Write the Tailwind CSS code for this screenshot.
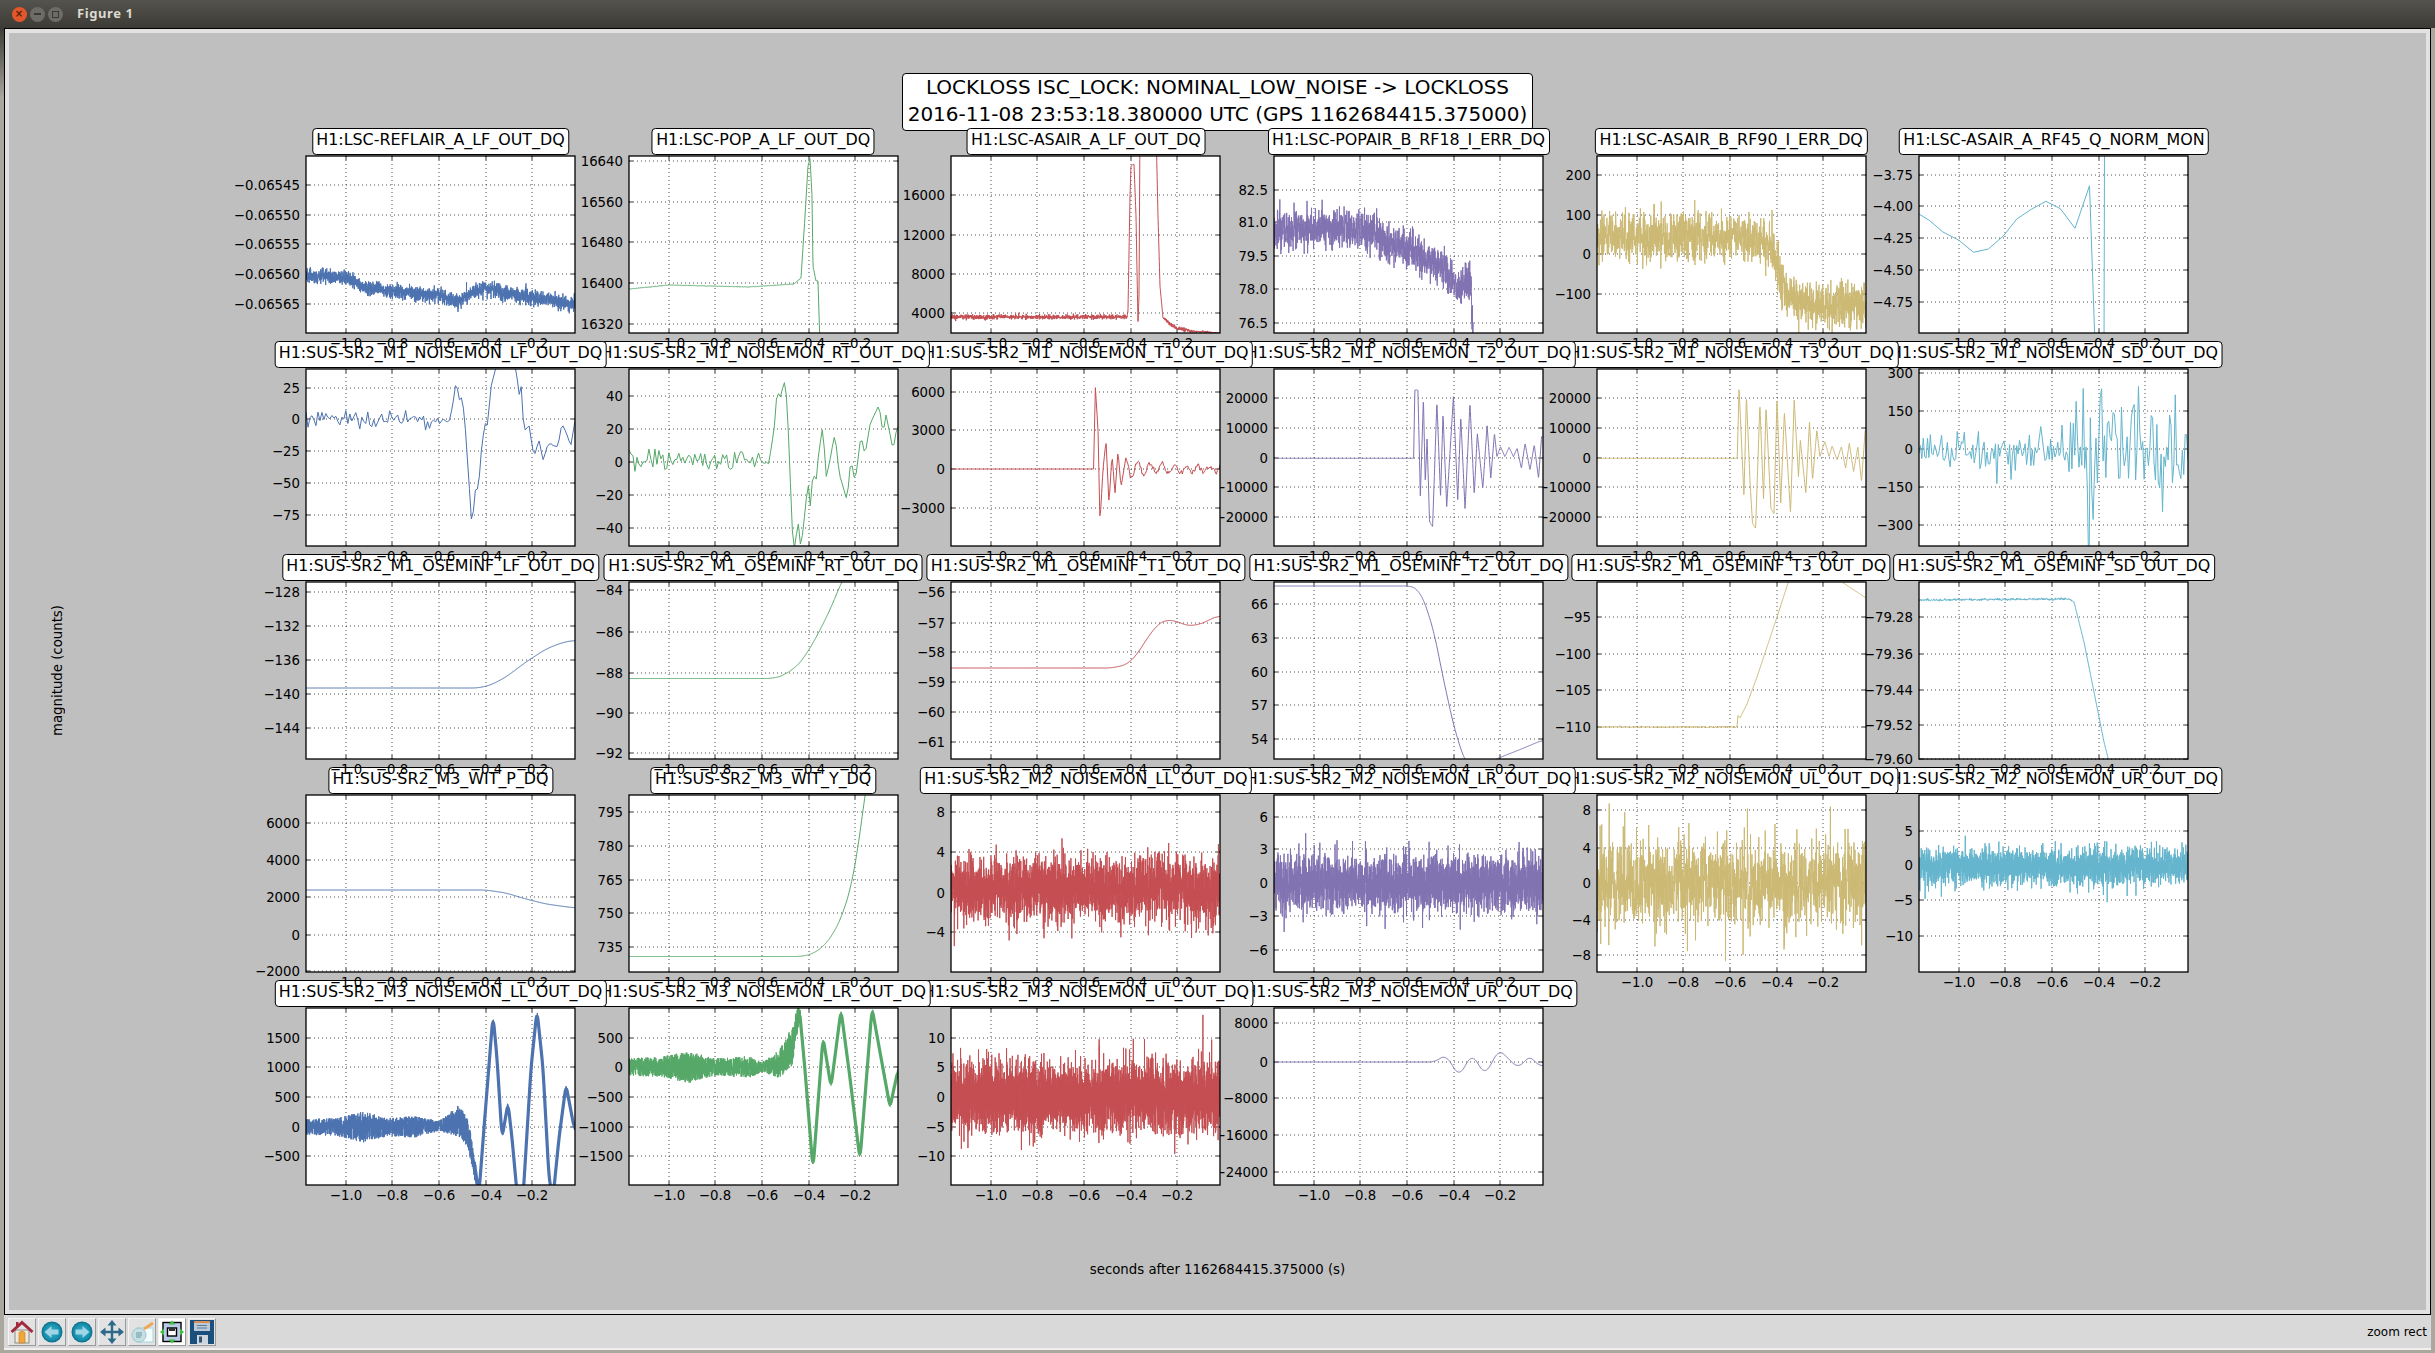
<!DOCTYPE html>
<html lang="en">

<head>
    <meta charset="UTF-8">
    <title>Figure 1</title>
    <script src="https://cdn.jsdelivr.net/npm/@tailwindcss/browser@4"></script>
</head>

<body class="flex h-[1353px] w-[2435px] flex-col overflow-hidden bg-[#aaa79f] font-['DejaVu_Sans',sans-serif] text-black">

    <!-- window title bar -->
    <div class="flex h-[28px] shrink-0 items-center bg-gradient-to-b from-[#55534d] to-[#3c3b36]">
        <div class="ml-[11.5px] flex h-[15px] w-[15px] items-center justify-center rounded-full bg-[#e2572b] text-[10px] leading-none font-bold text-[#5a1d08]">×</div>
        <div class="ml-[3.5px] flex h-[15px] w-[15px] items-center justify-center rounded-full bg-[#6d6c67]"><div class="h-[2px] w-[7px] bg-[#3a3934]"></div></div>
        <div class="ml-[3px] flex h-[15px] w-[15px] items-center justify-center rounded-full bg-[#6d6c67]"><div class="h-[7px] w-[7px] border border-[#3a3934]"></div></div>
        <span class="ml-[14px] font-['Noto_Sans',sans-serif] text-[13px] font-bold tracking-[0.6px] text-[#dcd9d0]">Figure 1</span>
    </div>

    <div class="flex min-h-0 flex-1">
        <div class="h-[70px] w-[4px] shrink-0 bg-gradient-to-b from-[#3c3b36] to-[#aaa79f]"></div>

        <div class="flex min-w-0 flex-1 flex-col pb-[3px]">
            <!-- figure canvas -->
            <div class="min-h-0 flex-1 border border-black">
                <div class="flex h-full flex-col items-center border-[4px] border-[#e2e2e2] bg-[#bfbfbf]">
                    <div class="relative mt-[40px] h-[58px] rounded-[4px] border border-black bg-white px-[5px] text-center text-[20px] leading-[27px] whitespace-nowrap">
                        LOCKLOSS ISC_LOCK: NOMINAL_LOW_NOISE -&gt; LOCKLOSS<br>2016-11-08 23:53:18.380000 UTC (GPS 1162684415.375000)
                    </div>
                    <div class="mt-[25px] flex items-center self-start">
                        <div class="ml-[39.5px] rotate-180 text-[13.300px] leading-[18px] whitespace-nowrap [writing-mode:vertical-rl]">magnitude (counts)</div>
                        <div id="plots" class="ml-[239.5px] grid grid-cols-[repeat(6,269px)] grid-rows-[repeat(5,177px)] gap-x-[53.7px] gap-y-[36px]"></div>
                    </div>
                    <div class="mt-[77px] text-[13.300px] leading-[16px] whitespace-nowrap">seconds after 1162684415.375000 (s)</div>
                </div>
            </div>

            <!-- toolbar -->
            <div class="flex h-[33px] shrink-0 items-center gap-[2px] bg-[#d9d9d9] pl-[3.5px]">
                <button class="flex h-[28px] w-[28px] items-center justify-center border border-t-[#f4f4f4] border-r-[#9a9a9a] border-b-[#9a9a9a] border-l-[#f4f4f4] bg-[#e2e2e2]">
                    <svg width="26" height="26" viewBox="0 0 26 26">
                        <rect x="6" y="11" width="14" height="13" fill="#eee9dc" stroke="#8b8b86" />
                        <path d="M10 24V13.5q3-3 6 0V24z" fill="#f2a63a" stroke="#b9802c" stroke-width=".6" />
                        <rect x="7" y="3" width="2.5" height="5" fill="#a3283c" />
                        <path d="M2.5 13 13 3.5 23.5 13" fill="none" stroke="#a3283c" stroke-width="3" />
                    </svg>
                </button>
                <button class="flex h-[28px] w-[28px] items-center justify-center border border-t-[#f4f4f4] border-r-[#9a9a9a] border-b-[#9a9a9a] border-l-[#f4f4f4] bg-[#e2e2e2]">
                    <svg width="26" height="26" viewBox="0 0 26 26">
                        <defs><radialGradient id="ball"><stop offset="0" stop-color="#3fb0c9" /><stop offset=".75" stop-color="#1590ad" /><stop offset="1" stop-color="#0d6c88" /></radialGradient></defs>
                        <circle cx="13" cy="13" r="10.5" fill="url(#ball)" />
                        <path d="M5.5 13 12.5 7v3.5h7v5h-7V19z" fill="#9fd5e4" />
                    </svg>
                </button>
                <button class="flex h-[28px] w-[28px] items-center justify-center border border-t-[#f4f4f4] border-r-[#9a9a9a] border-b-[#9a9a9a] border-l-[#f4f4f4] bg-[#e2e2e2]">
                    <svg width="26" height="26" viewBox="0 0 26 26">
                        <circle cx="13" cy="13" r="10.5" fill="url(#ball)" />
                        <path d="M20.5 13 13.5 7v3.5h-7v5h7V19z" fill="#9fd5e4" />
                    </svg>
                </button>
                <button class="flex h-[28px] w-[28px] items-center justify-center border border-t-[#f4f4f4] border-r-[#9a9a9a] border-b-[#9a9a9a] border-l-[#f4f4f4] bg-[#e2e2e2]">
                    <svg width="26" height="26" viewBox="0 0 26 26">
                        <path d="M5 13h16M13 5v16" stroke="#2d6a8a" stroke-width="2.4" />
                        <path d="M1 13 6.5 8.5v9zM25 13l-5.5-4.5v9zM13 1 8.5 6.5h9zM13 25l-4.5-5.500h9z" fill="#2d6a8a" />
                    </svg>
                </button>
                <button class="flex h-[28px] w-[28px] items-center justify-center border border-t-[#f4f4f4] border-r-[#9a9a9a] border-b-[#9a9a9a] border-l-[#f4f4f4] bg-[#e2e2e2]">
                    <svg width="26" height="26" viewBox="0 0 26 26">
                        <rect x="8" y="9" width="16" height="14" fill="#f4fbfc" stroke="#a5d6de" />
                        <circle cx="10" cy="16" r="7" fill="#c5dfe3" stroke="#9cc5cc" />
                        <path d="M7 14h6M7 16h6M7 18h5" stroke="#6d97a3" />
                        <path d="M15 10l9-6" stroke="#efa85a" stroke-width="3" />
                    </svg>
                </button>
                <button class="flex h-[28px] w-[28px] items-center justify-center border border-t-[#f4f4f4] border-r-[#9a9a9a] border-b-[#9a9a9a] border-l-[#f4f4f4] bg-[#e2e2e2]">
                    <svg width="26" height="26" viewBox="0 0 26 26">
                        <rect x="0" y="0" width="26" height="26" fill="#fff" />
                        <rect x="4" y="3.500" width="18" height="19" fill="#b9cbe6" stroke="#000" stroke-width="1.4" />
                        <rect x="8.500" y="9" width="9" height="8" fill="#fff" stroke="#000" stroke-width="1.4" />
                        <rect x="10" y="9" width="6" height="3" fill="#333" />
                        <path d="M13 1.500 9.500 5.500h7zM13 24.500l-3.500-4h7zM1 13l4-3.500v7zM25 13l-4-3.500v7z" fill="#3fbf3f" />
                    </svg>
                </button>
                <button class="flex h-[28px] w-[28px] items-center justify-center border border-t-[#f4f4f4] border-r-[#9a9a9a] border-b-[#9a9a9a] border-l-[#f4f4f4] bg-[#e2e2e2]">
                    <svg width="26" height="26" viewBox="0 0 26 26">
                        <rect x="1" y="1" width="24" height="24" fill="#1b4f7c" />
                        <rect x="5" y="2" width="16" height="10" fill="#b9c9d8" />
                        <rect x="5" y="2" width="16" height="2" fill="#d98e52" />
                        <path d="M8 6.500h10M8 9h10" stroke="#5d7d99" />
                        <rect x="8" y="16" width="11" height="9" fill="#cdd6de" />
                        <rect x="10" y="17.500" width="3" height="6" fill="#33536f" />
                    </svg>
                </button>
                <span class="mr-[4px] ml-auto text-[12px]">zoom rect</span>
            </div>
            <div class="h-[2px] shrink-0 bg-[#f0f0f0]"></div>
        </div>

        <div class="w-[4px] shrink-0"></div>
    </div>

    <script>
        // same colour cycle in every row
        const colors = ['#4c72b0', '#55a868', '#c44e52', '#8172b2', '#ccb974', '#64b5cd'];

        let seed = 20161108;
        function rnd() {
            seed = (seed + 0x6D2B79F5) | 0;
            let t = Math.imul(seed ^ (seed >>> 15), 1 | seed);
            t = (t + Math.imul(t ^ (t >>> 7), 61 | t)) ^ t;
            return ((t ^ (t >>> 14)) >>> 0) / 4294967296;
        }
        function gauss() {
            return Math.sqrt(-2 * Math.log(rnd() + 1e-9)) * Math.cos(6.2832 * rnd());
        }
        // piecewise linear through [x, y] knots
        function k(pts) {
            return x => {
                if (x <= pts[0][0]) return pts[0][1];
                for (let i = 1; i < pts.length; i++) {
                    if (x <= pts[i][0]) {
                        const a = pts[i - 1], b = pts[i];
                        return a[1] + (b[1] - a[1]) * (x - a[0]) / (b[0] - a[0]);
                    }
                }
                return pts[pts.length - 1][1];
            };
        }
        const c = v => () => v;
        // points measured off a stretched crop of the plot
        const z = (pts, xo) => k(pts.map(p => [(p[0] - xo) / 1.633, p[1] / 3 - 9]));

        const m = '\u2212';
        const t = s => s.map(a => [String(a[0]).replace('-', m), a[1]]);

        const plots = [
            { title: 'H1:LSC-REFLAIR_A_LF_OUT_DQ', ticks: t([['-0.06545', 29], ['-0.06550', 59], ['-0.06555', 88], ['-0.06560', 118], ['-0.06565', 148]]),
              f: k([[0, 119], [40, 122], [60, 131], [100, 137], [133, 139], [150, 146], [165, 138], [180, 131], [200, 137], [269, 149]]), sig: c(3.6), n: 2200 },
            { title: 'H1:LSC-POP_A_LF_OUT_DQ', ticks: t([[16640, 5], [16560, 46], [16480, 86], [16400, 127], [16320, 168]]),
              f: k([[0, 133], [40, 129], [120, 131], [165, 128], [172, 122], [176, 60], [179, 10], [181, 2], [183, 40], [184, 110], [187, 125], [189, 125], [191, 190], [192, 300], [269, 300]]), sig: c(0.15), n: 800 },
            { title: 'H1:LSC-ASAIR_A_LF_OUT_DQ', ticks: t([[16000, 39], [12000, 79], [8000, 118], [4000, 157]]),
              f: k([[0, 161], [176, 161], [177, 155], [179, 40], [180, 10], [183, 8], [185, 60], [187, 168], [188, 140], [189, -30], [205, -30], [207, 60], [209, 130], [212, 162], [225, 172], [240, 175], [269, 177]]),
              sig: k([[0, 1.2], [176, 1.2], [178, 0], [212, 0], [215, 1], [250, 0.6], [269, 0.3]]), n: 1600 },
            { title: 'H1:LSC-POPAIR_B_RF18_I_ERR_DQ', ticks: t([['82.5', 34], ['81.0', 66], ['79.5', 100], ['78.0', 133], ['76.5', 167]]),
              f: k([[0, 76], [35, 72], [86, 74], [127, 90], [160, 105], [178, 122], [183, 132], [190, 125], [197, 128], [199, 178], [200, 300], [269, 300]]),
              sig: k([[0, 9.5], [130, 9.5], [199, 9]]), n: 1800 },
            { title: 'H1:LSC-ASAIR_B_RF90_I_ERR_DQ', ticks: t([[200, 19], [100, 59], [0, 98], [-100, 138]]),
              f: k([[0, 80], [165, 82], [175, 95], [190, 140], [205, 148], [269, 150]]), sig: c(12), n: 1500 },
            { title: 'H1:LSC-ASAIR_A_RF45_Q_NORM_MON', ticks: t([['-3.75', 19], ['-4.00', 50], ['-4.25', 82], ['-4.50', 114], ['-4.75', 146]]),
              pts: [[0, 58], [10.8, 64.7], [23.9, 76], [39.6, 84], [54.500, 96.3], [69.4, 93], [84.3, 80], [97.8, 63], [112.3, 53.3], [126.9, 45.3], [141.4, 52.7], [156, 72.3], [170.5, 29.7], [175.7, 180], [176.5, 200], [185, 200], [185.5, -10]] },

            { title: 'H1:SUS-SR2_M1_NOISEMON_LF_OUT_DQ', ticks: t([[25, 19], [0, 50], [-25, 82], [-50, 114], [-75, 146]]),
              f: k([[0, 50], [136, 50], [143, 53], [147, 34], [150, 12], [154, 33], [156, 28], [159, 54], [166, 159], [170, 113], [172, 124], [176, 74], [180, 51], [181, 59], [185, 19], [190, -2], [210, -2], [213, 26], [215, 14], [218, 63], [223, 56], [228, 89], [233, 71], [237, 91], [242, 74], [252, 78], [256, 54], [265, 76], [269, 51]]),
              sig: k([[0, 4.6], [136, 4.6], [140, 0.5], [269, 0.5]]), n: 135 },
            { title: 'H1:SUS-SR2_M1_NOISEMON_RT_OUT_DQ', ticks: t([[40, 27], [20, 60], [0, 93], [-20, 126], [-40, 159]]),
              f: k([[0, 89], [140, 93], [145, 61], [148, 23], [152, 28], [155, 11], [158, 31], [164, 176], [166, 181], [169, 150], [172, 181], [179, 113], [181, 139], [184, 104], [187, 113], [190, 81], [194, 56], [197, 109], [201, 91], [206, 64], [210, 104], [218, 131], [222, 89], [226, 114], [232, 66], [236, 86], [241, 56], [250, 36], [254, 64], [257, 46], [264, 81], [268, 58]]),
              sig: k([[0, 5], [136, 5], [140, 0.4], [269, 0.4]]), n: 135 },
            { title: 'H1:SUS-SR2_M1_NOISEMON_T1_OUT_DQ', ticks: t([[6000, 23], [3000, 61], [0, 100], [-3000, 139]]),
              f: x => x < 175 ? k([[0, 100], [143, 100], [144, 13], [147, 60], [149, 154], [152, 100], [155, 72], [158, 135], [161, 85], [164, 125], [167, 82], [170, 118], [175, 88]])(x) : 100 - 9 * Math.exp(-(x - 175) / 70) * Math.cos(6.2832 * (x - 175) / 12),
              sig: k([[0, 0], [143, 0], [176, 0], [180, 1.6], [269, 1.6]]), n: 300 },
            { title: 'H1:SUS-SR2_M1_NOISEMON_T2_OUT_DQ', ticks: t([[20000, 29], [10000, 59], [0, 89], [-10000, 118], [-20000, 148]]),
              f: z([[40, 295], [268, 295], [270, 90], [275, 90], [279, 410], [284, 115], [287, 370], [290, 235], [294, 485], [299, 500], [306, 125], [312, 410], [316, 160], [322, 440], [333, 110], [340, 420], [345, 170], [352, 450], [360, 128], [367, 405], [372, 220], [381, 385], [388, 195], [394, 355], [400, 220], [404, 290], [410, 260], [417, 290], [424, 262], [431, 290], [437, 265], [444, 325], [450, 250], [458, 330], [465, 255], [472, 355], [477, 230]], 40), sig: c(0), n: 1000 },
            { title: 'H1:SUS-SR2_M1_NOISEMON_T3_OUT_DQ', ticks: t([[20000, 29], [10000, 59], [0, 89], [-10000, 118], [-20000, 148]]),
              f: z([[566, 295], [795, 295], [798, 85], [806, 410], [810, 108], [816, 370], [820, 490], [825, 505], [832, 132], [838, 420], [842, 140], [850, 445], [855, 462], [860, 115], [866, 430], [872, 155], [882, 460], [888, 120], [895, 350], [898, 240], [907, 400], [913, 185], [918, 360], [925, 210], [930, 290], [938, 245], [945, 290], [950, 258], [958, 300], [965, 260], [972, 325], [978, 250], [985, 335], [992, 260], [998, 365], [1004, 210]], 566), sig: c(0), n: 1000 },
            { title: 'H1:SUS-SR2_M1_NOISEMON_SD_OUT_DQ', ticks: t([[300, 4], [150, 42], [0, 80], [-150, 118], [-300, 156]]),
              f: k([[0, 81], [168, 81], [170, 160], [172, 81], [180, 81], [182, 20], [184, 81], [269, 81]]),
              sig: k([[0, 11], [135, 12], [165, 24], [269, 32]]), n: 190 },

            { title: 'H1:SUS-SR2_M1_OSEMINF_LF_OUT_DQ', ticks: t([[-128, 10], [-132, 44], [-136, 78], [-140, 112], [-144, 146]]),
              f: k([[0, 106], [172, 106], [185, 103], [200, 95], [220, 80], [240, 67], [255, 61], [269, 58]]), s: 6 },
            { title: 'H1:SUS-SR2_M1_OSEMINF_RT_OUT_DQ', ticks: t([[-84, 8], [-86, 50], [-88, 91], [-90, 131], [-92, 171]]),
              f: k([[0, 96.5], [140, 96.5], [150, 95], [160, 90], [170, 82], [180, 68], [190, 50], [200, 30], [214, -3], [269, -80]]), s: 4 },
            { title: 'H1:SUS-SR2_M1_OSEMINF_T1_OUT_DQ', ticks: t([[-56, 10], [-57, 41], [-58, 70], [-59, 100], [-60, 130], [-61, 160]]),
              f: k([[0, 86], [160, 86], [175, 83], [185, 74], [197, 55], [207, 42], [215, 38], [225, 39], [237, 44], [250, 42], [260, 37], [269, 33]]), s: 6 },
            { title: 'H1:SUS-SR2_M1_OSEMINF_T2_OUT_DQ', ticks: t([[66, 22], [63, 56], [60, 90], [57, 123], [54, 157]]),
              f: k([[0, 4], [135, 4], [142, 6], [150, 18], [160, 50], [170, 100], [180, 145], [190, 177], [200, 190], [210, 185], [222, 177], [240, 170], [269, 158]]), s: 4 },
            { title: 'H1:SUS-SR2_M1_OSEMINF_T3_OUT_DQ', ticks: t([[-95, 35], [-100, 72], [-105, 108], [-110, 145]]),
              f: k([[0, 145], [140, 145], [141, 133], [143, 136], [146, 130], [150, 122], [160, 95], [170, 65], [180, 35], [192, -2], [193, -20], [240, -20], [245, 0], [269, 16]]), sig: k([[0, 0.4], [140, 0.4], [142, 0], [269, 0]]), n: 800 },
            { title: 'H1:SUS-SR2_M1_OSEMINF_SD_OUT_DQ', ticks: t([['-79.28', 35], ['-79.36', 72], ['-79.44', 108], ['-79.52', 143], ['-79.60', 177]]),
              f: k([[0, 18], [150, 17], [155, 20], [165, 60], [175, 110], [185, 160], [190, 180], [200, 260], [269, 260]]), sig: k([[0, 0.6], [150, 0.6], [156, 0], [269, 0]]), n: 800 },

            { title: 'H1:SUS-SR2_M3_WIT_P_DQ', ticks: t([[6000, 28], [4000, 65], [2000, 102], [0, 140], [-2000, 176]]),
              f: k([[0, 95], [180, 95], [200, 98], [220, 104], [240, 109], [269, 113]]), s: 6 },
            { title: 'H1:SUS-SR2_M3_WIT_Y_DQ', ticks: t([[795, 17], [780, 51], [765, 85], [750, 118], [735, 152]]),
              f: k([[0, 161.5], [170, 161.5], [180, 160], [190, 155], [200, 145], [210, 128], [220, 100], [228, 60], [236, 0], [250, -90], [269, -90]]), s: 4 },
            { title: 'H1:SUS-SR2_M2_NOISEMON_LL_OUT_DQ', ticks: t([[8, 17], [4, 57], [0, 98], [-4, 137]]), f: c(94), sig: c(16), n: 2600 },
            { title: 'H1:SUS-SR2_M2_NOISEMON_LR_OUT_DQ', ticks: t([[6, 22], [3, 54], [0, 88], [-3, 121], [-6, 155]]), f: c(88), sig: c(14), n: 2600 },
            { title: 'H1:SUS-SR2_M2_NOISEMON_UL_OUT_DQ', ticks: t([[8, 15], [4, 53], [0, 88], [-4, 125], [-8, 160]]), f: c(88), sig: c(22), n: 1300 },
            { title: 'H1:SUS-SR2_M2_NOISEMON_UR_OUT_DQ', ticks: t([[5, 36], [0, 70], [-5, 105], [-10, 141]]), f: c(72), sig: c(9), n: 2600 },

            { title: 'H1:SUS-SR2_M3_NOISEMON_LL_OUT_DQ', ticks: t([[1500, 30], [1000, 59], [500, 89], [0, 119], [-500, 148]]),
              f: k([[0, 119], [100, 119], [133, 118], [153, 113], [162, 125], [169, 162], [173, 185], [178, 120], [187, 7], [191, 50], [196, 130], [202, 95], [206, 130], [211, 185], [217, 190], [225, 60], [231, 2], [237, 60], [243, 170], [247, 190], [253, 130], [260, 77], [268, 119]]),
              amp: k([[0, 8], [30, 9], [59, 16], [82, 9], [108, 11], [133, 5], [153, 16], [165, 14], [175, 7], [190, 4], [269, 4]]), n: 2600, s: 6, thick: [165, 3.2] },
            { title: 'H1:SUS-SR2_M3_NOISEMON_LR_OUT_DQ', ticks: t([[500, 30], [0, 59], [-500, 89], [-1000, 119], [-1500, 148]]),
              f: k([[0, 59], [133, 59], [150, 56], [163, 39], [170.5, 2], [176, 62], [184, 162], [194, 29], [202, 79], [212, 2], [221, 70], [231, 152], [243, 0], [261, 99], [269, 62]]),
              amp: k([[0, 9], [30, 10], [60, 16], [85, 9], [120, 11], [133, 5], [150, 14], [163, 20], [172, 8], [185, 3], [269, 4]]), n: 2600, s: 6, thick: [165, 3.2] },
            { title: 'H1:SUS-SR2_M3_NOISEMON_UL_OUT_DQ', ticks: t([[10, 30], [5, 59], [0, 89], [-5, 119], [-10, 148]]), f: c(89), sig: c(17), n: 4000 },
            { title: 'H1:SUS-SR2_M3_NOISEMON_UR_OUT_DQ', ticks: t([[8000, 15], [0, 54], [-8000, 90], [-16000, 127], [-24000, 164]]),
              f: k([[0, 54], [160, 54], [172, 47], [185, 68.5], [198, 46], [211, 67], [225, 41.5], [244, 60], [257, 47], [264, 59], [269, 56]]), s: 5 },
        ];

        const xticks = [['\u22121.0', 40], ['\u22120.8', 86], ['\u22120.6', 133], ['\u22120.4', 180], ['\u22120.2', 226]];

        function center(p) {
            const n = p.n || 540;
            let ys = [];
            for (let i = 0; i <= n; i++) ys.push(p.f(269 * i / n));
            if (p.s) {
                ys = ys.map((_, i) => {
                    let sum = 0, cnt = 0;
                    for (let j = Math.max(0, i - p.s * 2); j <= Math.min(n, i + p.s * 2); j++) { sum += ys[j]; cnt++; }
                    return sum / cnt;
                });
            }
            return ys.map((y, i) => [269 * i / n, y]);
        }

        function trace(p) {
            if (p.pts) return p.pts;
            return center(p).map(([x, y]) => {
                if (p.amp) return [x, y + p.amp(x) * (rnd() * 2 - 1)];
                if (p.sig) return [x, y + p.sig(x) * gauss()];
                return [x, y];
            });
        }

        const toPoints = pts => pts.map(a => a[0].toFixed(2) + ',' + a[1].toFixed(2)).join(' ');

        function plotHtml(p, i) {
            const color = colors[i % 6];
            let grid = '', labels = '', thick = '';
            xticks.forEach(([lab, x]) => {
                grid += `<path d="M${x} 0V177" stroke="#222" stroke-width=".8" stroke-dasharray="1 3"/><path d="M${x} 0v4M${x} 177v-4" stroke="#000" stroke-width=".8"/>`;
                labels += `<text x="${x}" y="15" transform="translate(0 177)" text-anchor="middle" font-size="13.3">${lab}</text>`;
            });
            p.ticks.forEach(([lab, y]) => {
                grid += `<path d="M0 ${y}H269" stroke="#222" stroke-width=".8" stroke-dasharray="1 3"/><path d="M0 ${y}h4M269 ${y}h-4" stroke="#000" stroke-width=".8"/>`;
                labels += `<text x="-6" y="${y + 4.5}" text-anchor="end" font-size="13.3">${lab}</text>`;
            });
            // fast oscillation reads as a thick stroke once the slope takes over
            if (p.thick) {
                const part = center(p).filter(a => a[0] >= p.thick[0]);
                thick = `<polyline clip-path="url(#clip${i})" points="${toPoints(part)}" fill="none" stroke="${color}" stroke-width="${p.thick[1]}" stroke-linejoin="round"/>`;
            }
            return `<div class="relative h-[177px] w-[269px]" style="z-index:${100 - i}">
                <svg width="269" height="177" class="absolute inset-0 overflow-visible">
                    <defs><clipPath id="clip${i}"><rect width="269" height="177"/></clipPath></defs>
                    <rect width="269" height="177" fill="#fff"/>
                    ${grid}
                    <polyline clip-path="url(#clip${i})" points="${toPoints(trace(p))}" fill="none" stroke="${color}" stroke-width="1" stroke-linejoin="round"/>
                    ${thick}
                    <rect width="269" height="177" fill="none" stroke="#000" stroke-width="1.3"/>
                </svg>
                <div class="absolute bottom-full left-1/2 mb-[1.5px] h-[26.5px] -translate-x-1/2 rounded-[4px] border border-black bg-white px-[3.5px] text-[15.9px] leading-[21px] whitespace-nowrap">${p.title}</div>
                <svg width="269" height="177" class="absolute inset-0 overflow-visible">${labels}</svg>
            </div>`;
        }

        document.getElementById('plots').innerHTML = plots.map(plotHtml).join('');
    </script>
</body>

</html>
